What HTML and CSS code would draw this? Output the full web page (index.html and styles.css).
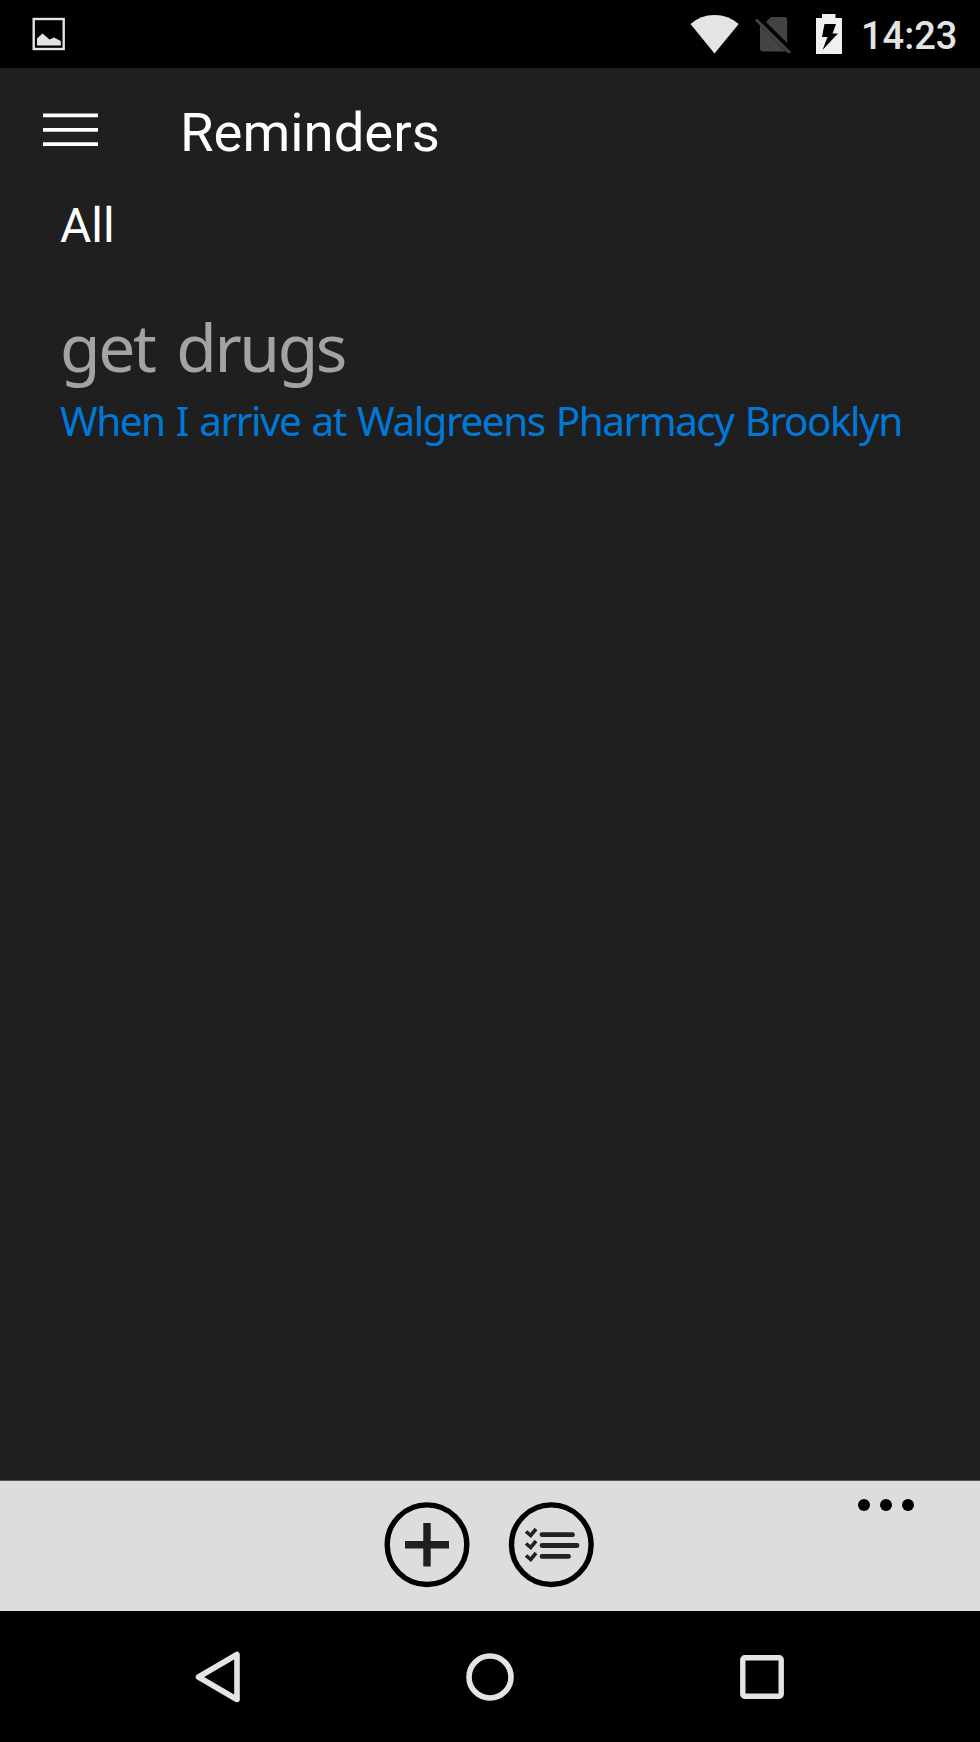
FILE: index.html
```html
<!DOCTYPE html>
<html lang="en">
<head>
    <meta charset="UTF-8">
    <meta name="viewport" content="width=device-width, initial-scale=1.0">
    <title>Reminders</title>
    <link rel="stylesheet" href="styles.css">
</head>
<body>
    <div class="status-bar">
        <svg class="status-image" width="34" height="34" viewBox="0 0 34 34">
            <rect x="1.7" y="2" width="30" height="30" fill="none" stroke="#e4e4e4" stroke-width="2.4"/>
            <path d="M5 28.5V21.5L10.5 16.5L17.5 22.5L22 20.5L28.8 24V28.5Z" fill="#e4e4e4"/>
        </svg>
        <div class="status-icons">
            <svg width="50" height="40" viewBox="0 0 50 40">
                <path d="M0.5 10Q10.5 1 24.5 1T48.7 10L24.5 39.5Z" fill="#e4e4e4"/>
            </svg>
            <svg class="sim" width="38" height="38" viewBox="0 0 38 38">
                <path d="M12 7L17 2H30Q33.2 2 33.2 5V28Z" fill="#444"/>
                <path d="M6 10.5L32 36.5H9Q6 36.5 6 33.5Z" fill="#444"/>
                <path d="M2 4.5L36 38" fill="none" stroke="#444" stroke-width="3"/>
            </svg>
            <svg class="battery" width="26" height="40" viewBox="0 0 26 40">
                <path d="M0 4H6V0H19.5V4H26V40H0Z" fill="#f0f0f0"/>
                <path d="M8.5 10H20L16.5 19.5H22L6.5 36L11.5 23H6Z" fill="#000"/>
            </svg>
            <span class="clock">14:23</span>
        </div>
    </div>

    <header>
        <button class="menu-button" aria-label="Menu">
            <svg width="55" height="34" viewBox="0 0 55 34">
                <path d="M0 2.3H55M0 16.9H55M0 31.2H55" stroke="#fff" stroke-width="3.8"/>
            </svg>
        </button>
        <h1>Reminders</h1>
    </header>

    <main>
        <h2>All</h2>
        <div class="reminder">
            <div class="reminder-title">get drugs</div>
            <div class="reminder-place">When I arrive at Walgreens Pharmacy Brooklyn</div>
        </div>
    </main>

    <div class="app-bar">
        <div></div>
        <div class="app-buttons">
            <svg width="86" height="86" viewBox="0 0 86 86">
                <circle cx="43" cy="42.7" r="39.8" fill="none" stroke="#000" stroke-width="5.4"/>
                <path d="M43 21V64.5M21 42.7H65" stroke="#1f1f1f" stroke-width="7.4"/>
            </svg>
            <svg width="86" height="86" viewBox="0 0 86 86">
                <circle cx="43.3" cy="42.7" r="39.8" fill="none" stroke="#000" stroke-width="5.4"/>
                <g fill="none" stroke="#222" stroke-width="4.8" stroke-linecap="round">
                    <path d="M34 32.7H64.5M34 43.5H69M34 54.4H60.5"/>
                </g>
                <g fill="none" stroke="#222" stroke-width="3.6">
                    <path d="M18 29.5L22.7 33.5L28 27M18 41.5L22.7 45.5L28 39M18 53.5L22.7 57.5L28 51"/>
                </g>
            </svg>
        </div>
        <div class="more">
            <span></span>
            <span></span>
            <span></span>
        </div>
    </div>

    <nav>
        <svg width="46" height="52" viewBox="0 0 46 52">
            <path d="M3.5 26L42 3.5V48.5Z" fill="none" stroke="#e4e4e4" stroke-width="5.6" stroke-linejoin="round"/>
        </svg>
        <svg width="48" height="48" viewBox="0 0 48 48">
            <circle cx="24" cy="24" r="21" fill="none" stroke="#e4e4e4" stroke-width="5.6"/>
        </svg>
        <svg width="44" height="44" viewBox="0 0 44 44">
            <rect x="2.8" y="2.8" width="38.4" height="38.4" rx="2" fill="none" stroke="#e4e4e4" stroke-width="5.4"/>
        </svg>
    </nav>
</body>
</html>
```

FILE: styles.css
```css
body {
    display: flex;
    flex-direction: column;
    height: 1742px;
    margin: 0;
    font-family: Roboto, sans-serif;
    background-color: #1f1f1f;
    color: white;
}

svg {
    display: block;
    flex-shrink: 0;
}

.status-bar {
    display: flex;
    justify-content: space-between;
    align-items: center;
    height: 68px;
    padding: 0 22px 0 32px;
    background-color: #000;
}

.status-icons {
    display: flex;
    align-items: center;
}

.sim {
    margin-left: 14px;
}

.battery {
    margin-left: 24px;
}

.clock {
    width: 97px;
    margin-left: 19px;
    font-size: 38px;
    font-weight: 500;
    line-height: 68px;
    color: #e4e4e4;
    padding-top: 3px;
    white-space: nowrap;
}

header {
    display: flex;
    align-items: center;
    height: 128px;
    padding-left: 43px;
}

.menu-button {
    width: 55px;
    padding: 0;
    margin-top: -4px;
    border: none;
    background: none;
}

h1 {
    margin: 0 0 0 82px;
    font-size: 54.5px;
    font-weight: 400;
}

main {
    flex-grow: 1;
    padding-left: 60px;
}

h2 {
    margin: 0;
    font-size: 48px;
    font-weight: 400;
    line-height: 60px;
}

.reminder {
    margin-top: 49px;
    font-family: "Noto Sans", sans-serif;
    white-space: nowrap;
}

.reminder-title {
    font-size: 66px;
    line-height: 82px;
    letter-spacing: -2.4px;
    word-spacing: 7px;
    color: #a3a3a3;
}

.reminder-place {
    font-size: 40.5px;
    line-height: 68px;
    letter-spacing: -1.5px;
    word-spacing: 2.2px;
    color: #0078d7;
}

.app-bar {
    display: grid;
    grid-template-columns: 384px 1fr 122px;
    height: 130px;
    border-top: 1px solid #555;
    background-color: #ddd;
}

.app-buttons {
    display: flex;
    gap: 38px;
    padding-top: 21px;
}

.more {
    display: flex;
    gap: 10px;
    padding-top: 18px;
}

.more span {
    width: 12px;
    height: 12px;
    border-radius: 50%;
    background-color: #000;
}

nav {
    display: flex;
    align-items: center;
    height: 131px;
    padding-left: 195px;
    background-color: #000;
}

nav svg + svg {
    margin-left: 225px;
}

nav svg:last-child {
    margin-left: 226px;
}
```
